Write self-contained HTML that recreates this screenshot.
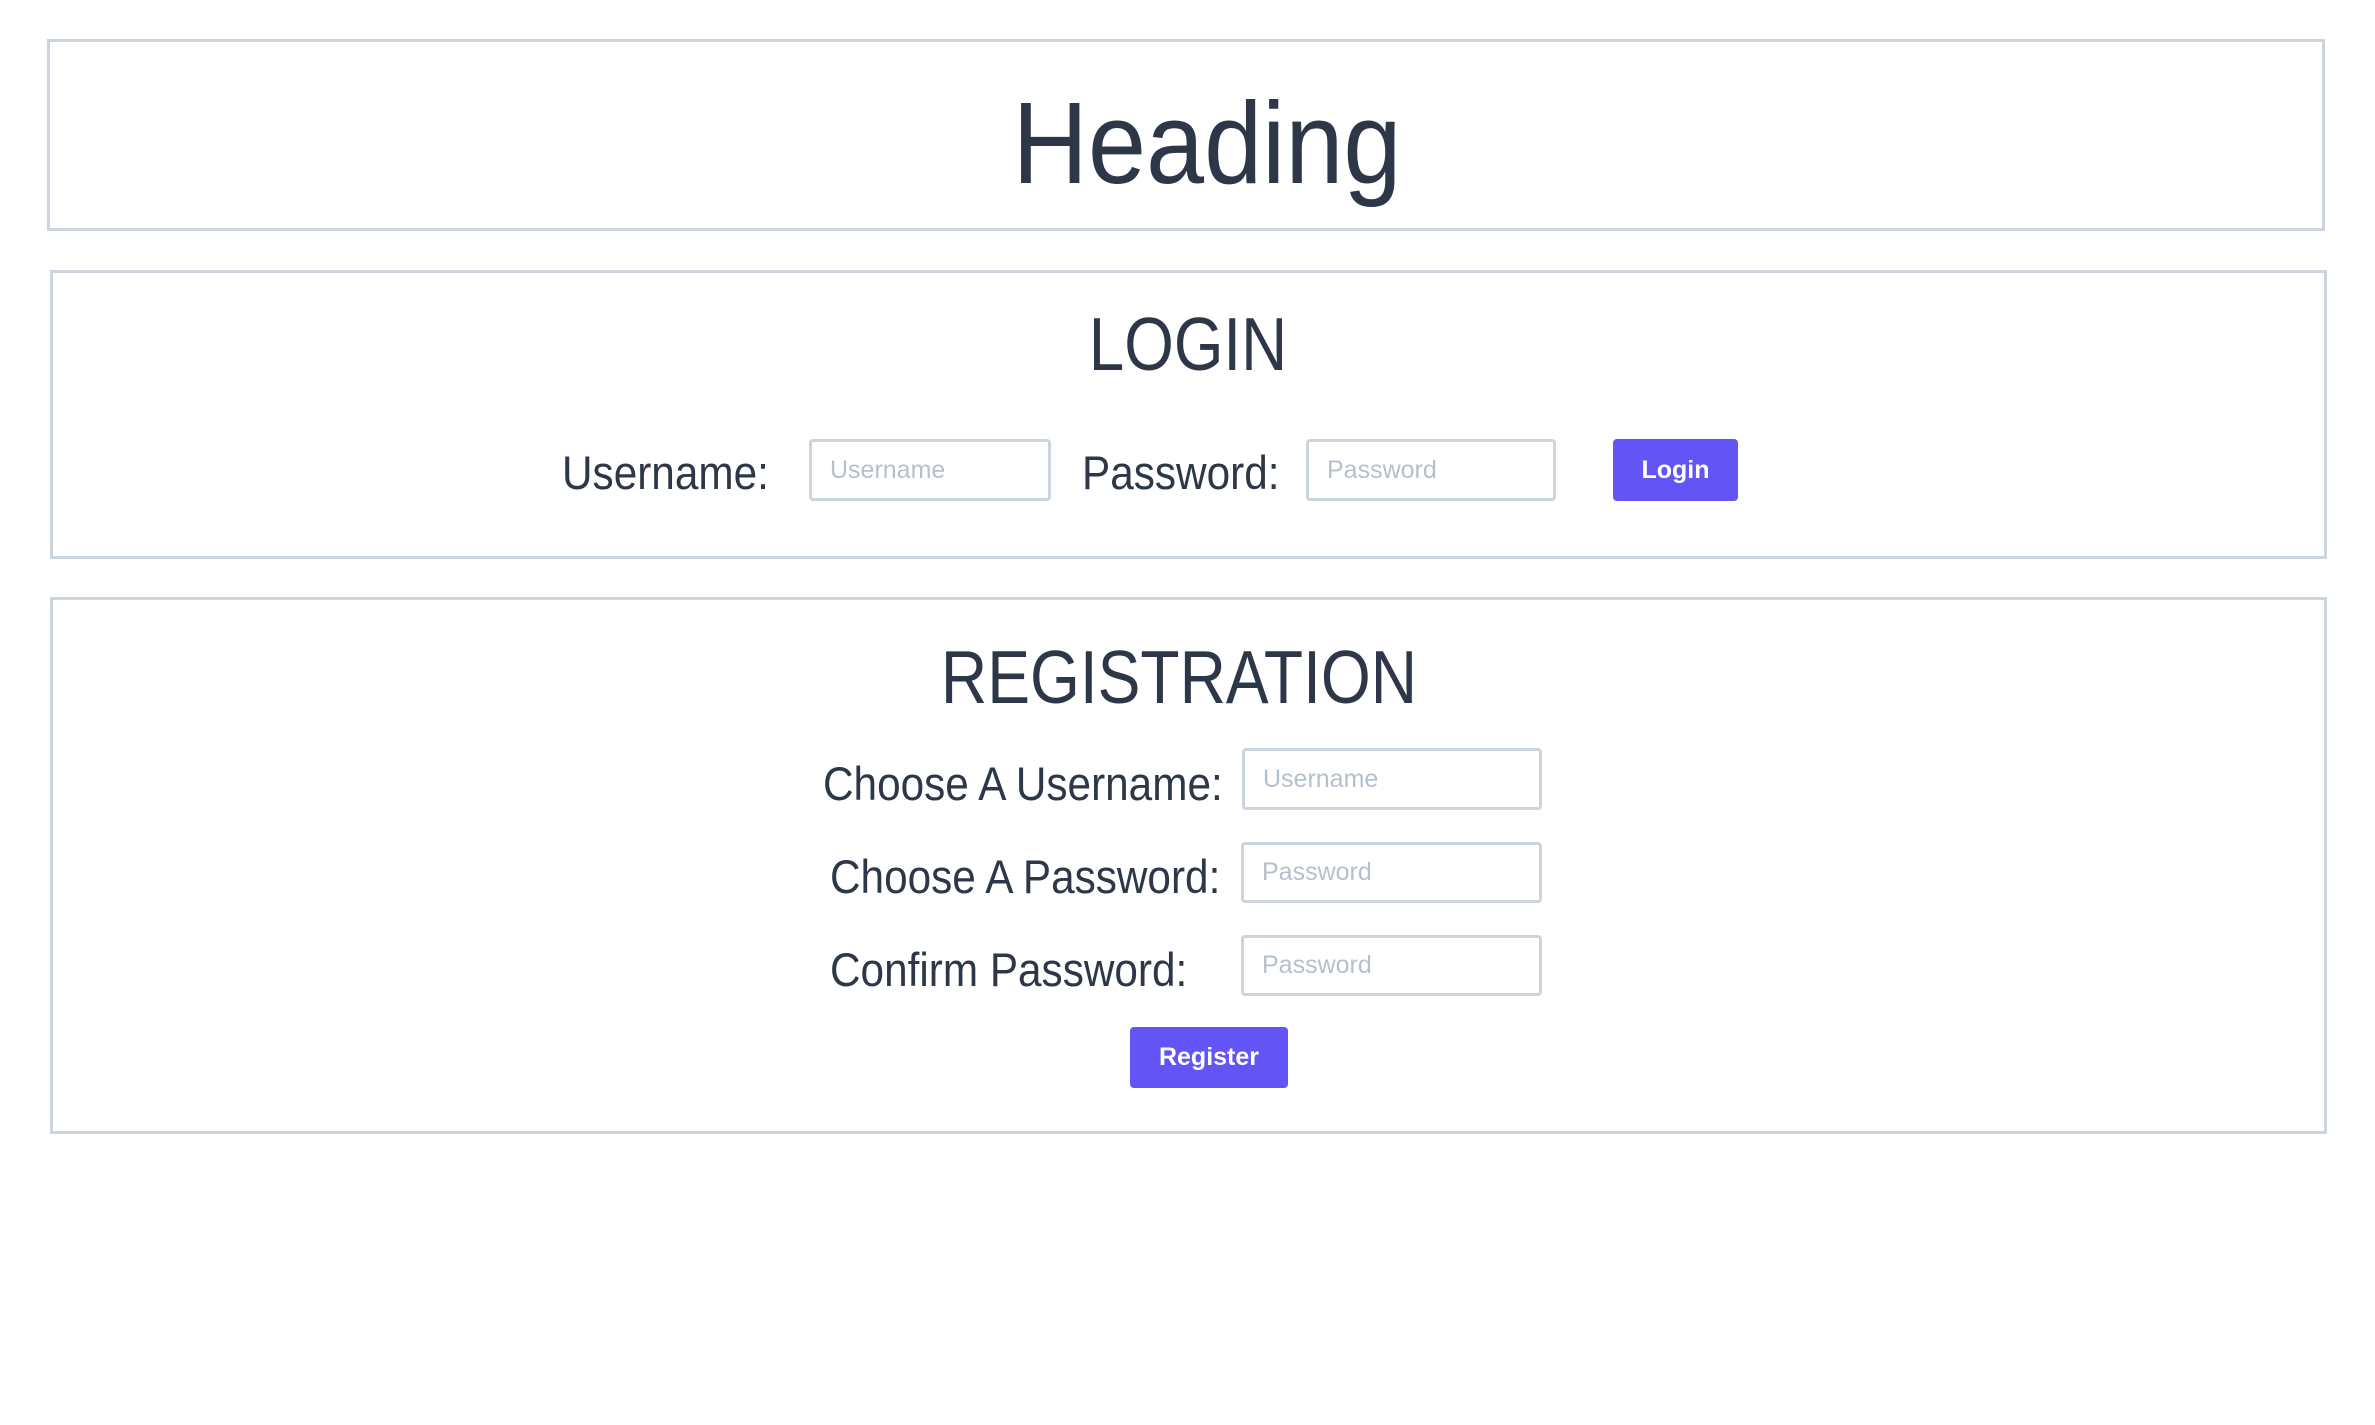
<!DOCTYPE html>
<html><head><style>
body{margin:0;width:2375px;height:1425px;background:#fff;font-family:"Liberation Sans",sans-serif;color:#2d3748;position:relative;overflow:hidden}
.box{position:absolute;border:3px solid #cbd5e0;box-sizing:border-box}
.t{position:absolute;white-space:nowrap;line-height:1}
.c{transform:translateX(-50%) scaleX(.9)}
.l{transform-origin:left;transform:scaleX(.9)}
.in{position:absolute;border:3px solid #cbd5e0;border-radius:4px;box-sizing:border-box;color:#b5c0cd;font-size:25px;padding-left:18px;display:flex;align-items:center}
.btn{position:absolute;background:#6355f5;border-radius:4px;color:#fff;font-size:25px;font-weight:bold;display:flex;align-items:center;justify-content:center}
</style></head><body>
<div class="box" style="left:47px;top:39px;width:2278px;height:192px"></div>
<div class="t c" style="left:1207px;top:85px;font-size:116px">Heading</div>

<div class="box" style="left:50px;top:270px;width:2277px;height:289px"></div>
<div class="t" style="left:1188px;top:307px;font-size:75px;transform:translateX(-50%) scaleX(.85)">LOGIN</div>
<div class="t l" style="left:562px;top:449px;font-size:47px">Username:</div>
<div class="in" style="left:809px;top:439px;width:242px;height:62px">Username</div>
<div class="t l" style="left:1082px;top:449px;font-size:47px">Password:</div>
<div class="in" style="left:1306px;top:439px;width:250px;height:62px">Password</div>
<div class="btn" style="left:1613px;top:439px;width:125px;height:62px">Login</div>

<div class="box" style="left:50px;top:597px;width:2277px;height:537px"></div>
<div class="t" style="left:1179px;top:640px;font-size:75px;transform:translateX(-50%) scaleX(.855)">REGISTRATION</div>
<div class="t l" style="left:823px;top:760px;font-size:47px">Choose A Username:</div>
<div class="in" style="left:1242px;top:748px;width:300px;height:62px">Username</div>
<div class="t l" style="left:830px;top:853px;font-size:47px">Choose A Password:</div>
<div class="in" style="left:1241px;top:842px;width:301px;height:61px">Password</div>
<div class="t l" style="left:830px;top:946px;font-size:47px">Confirm Password:</div>
<div class="in" style="left:1241px;top:935px;width:301px;height:61px">Password</div>
<div class="btn" style="left:1130px;top:1027px;width:158px;height:61px">Register</div>
</body></html>
